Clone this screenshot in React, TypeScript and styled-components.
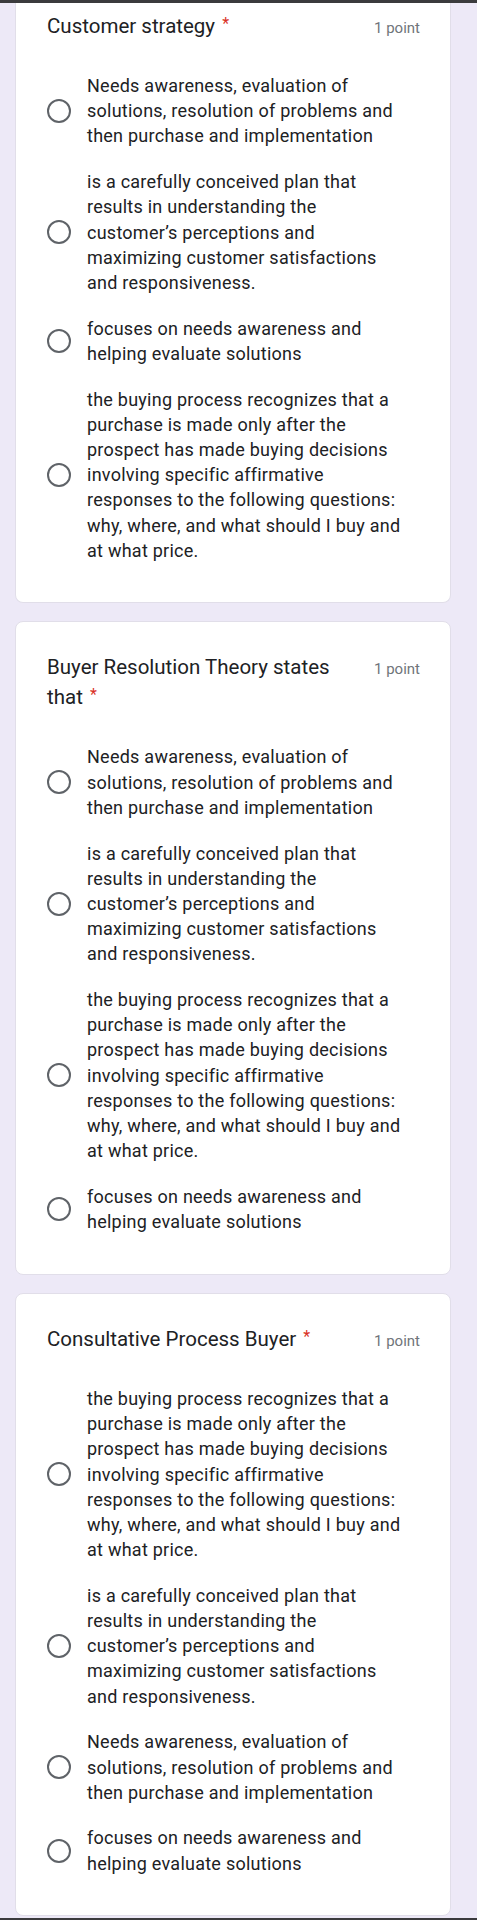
import React from "react";
import styled, { createGlobalStyle, css } from "styled-components";

const GlobalStyle = createGlobalStyle`
  html, body {
    margin: 0;
    padding: 0;
    background: #ede9f7;
  }
  body {
    font-family: Roboto, "Liberation Sans", Arial, sans-serif;
    -webkit-font-smoothing: antialiased;
  }
`;

const Page = styled.div`
  display: flex;
  flex-direction: column;
  min-height: 1920px;
  background: #ede9f7;
`;

const EdgeBar = styled.div<{ $h: number; $end?: boolean }>`
  flex: none;
  height: ${(p) => p.$h}px;
  background: #3b3b3d;
  ${(p) =>
    p.$end &&
    css`
      margin-top: auto;
    `}
`;

const CardList = styled.main`
  display: flex;
  flex-direction: column;
  gap: 18px;
  padding: 0 26px 0 15px;
`;

const Card = styled.section<{ $cutTop?: boolean }>`
  background: #ffffff;
  border: 1px solid #e1dee9;
  border-radius: 8px;
  padding: 30px 30px 39.5px 31px;
  ${(p) =>
    p.$cutTop &&
    css`
      border-top: none;
      border-top-left-radius: 0;
      border-top-right-radius: 0;
      padding-top: 8px;
    `}
`;

const Header = styled.header`
  display: flex;
  align-items: baseline;
  gap: 20px;
  margin-bottom: 32px;
`;

const Title = styled.h2`
  flex: 1;
  margin: 0;
  font-size: 20.5px;
  line-height: 30px;
  font-weight: 400;
  color: #202124;
`;

const Required = styled.span`
  color: #d93025;
  font-size: 16px;
  line-height: 1;
  vertical-align: 4px;
  margin-left: 2px;
`;

const Points = styled.span`
  flex: none;
  font-size: 15px;
  line-height: 20px;
  color: #70757a;
`;

const OptionList = styled.div`
  display: flex;
  flex-direction: column;
  gap: 20.5px;
`;

const OptionRow = styled.label`
  display: flex;
  align-items: center;
  gap: 16px;
  padding-right: 15px;
`;

const Radio = styled.span`
  flex: none;
  width: 24px;
  height: 24px;
  box-sizing: border-box;
  border: 2px solid #5f6368;
  border-radius: 50%;
`;

const OptionText = styled.span`
  font-size: 18px;
  line-height: 25.2px;
  letter-spacing: 0.25px;
  color: #202124;
`;

const A =
  "Needs awareness, evaluation of solutions, resolution of problems and then purchase and implementation";
const B =
  "is a carefully conceived plan that results in understanding the customer\u2019s perceptions and maximizing customer satisfactions and responsiveness.";
const C = "focuses on needs awareness and helping evaluate solutions";
const D =
  "the buying process recognizes that a purchase is made only after the prospect has made buying decisions involving specific affirmative responses to the following questions: why, where, and what should I buy and at what price.";

const questions = [
  { title: "Customer strategy", options: [A, B, C, D] },
  { title: "Buyer Resolution Theory states that", options: [A, B, D, C] },
  { title: "Consultative Process Buyer", options: [D, B, A, C] },
];

export default function App() {
  return (
    <>
      <GlobalStyle />
      <Page>
        <EdgeBar $h={3} />
        <CardList>
          {questions.map((q, i) => (
            <Card key={q.title} $cutTop={i === 0}>
              <Header>
                <Title>
                  {q.title} <Required>*</Required>
                </Title>
                <Points>1 point</Points>
              </Header>
              <OptionList>
                {q.options.map((o, j) => (
                  <OptionRow key={j}>
                    <Radio />
                    <OptionText>{o}</OptionText>
                  </OptionRow>
                ))}
              </OptionList>
            </Card>
          ))}
        </CardList>
        <EdgeBar $h={2} $end />
      </Page>
    </>
  );
}
